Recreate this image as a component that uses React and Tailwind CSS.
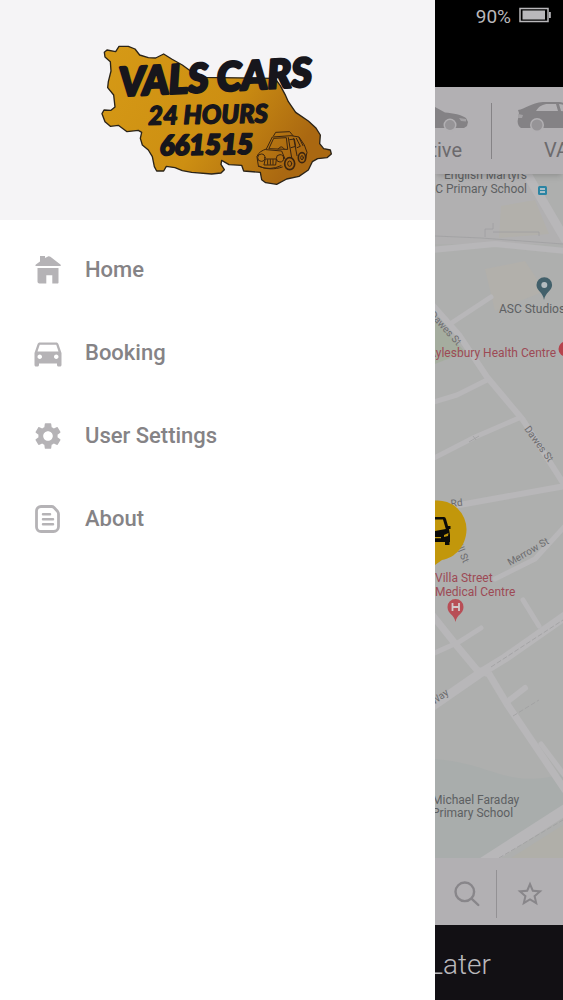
import React from 'react';
import { MdDirectionsCar, MdSettings, MdStarBorder } from 'react-icons/md';

const HomeIcon = () => (
    <svg viewBox="0 0 28 30" className="w-7 h-[30px]" fill="currentColor" aria-hidden="true">
        <path d="M6 1h5v2l3-1.6c.8-.4 1.6-.2 2.4.3L26.4 9.400c.8.6.5 1.600-.5 1.600H2.300c-1 0-1.200-1-.4-1.600L6 6.500z" />
        <path d="M3.500 13h21v14.500c0 .6-.4 1-1 1h-5.200v-8.300h-6v8.300H5.500c-1.200 0-2-.8-2-2z" />
    </svg>
);

const AboutIcon = () => (
    <svg viewBox="0 0 28 30" className="w-7 h-[30px]" fill="none" stroke="currentColor" strokeLinecap="round" strokeLinejoin="round" aria-hidden="true">
        <path strokeWidth="2.800" d="M7 2.500h10.500q1.500 0 2.500 1l3.500 3.800q1 1.200 1 2.700v12.500a5 5 0 0 1-5 5H7a4.500 4.500 0 0 1-4.500-4.500V7A4.500 4.500 0 0 1 7 2.500z" />
        <path strokeWidth="2.500" d="M9 10.300h7M9 15.300h10M9 20.300h10" />
    </svg>
);

const menu = [
    { label: 'Home', icon: <HomeIcon /> },
    { label: 'Booking', icon: <MdDirectionsCar size={36} /> },
    { label: 'User Settings', icon: <MdSettings size={32} /> },
    { label: 'About', icon: <AboutIcon /> },
];

const Logo = () => (
    <svg viewBox="0 0 735 480" className="w-[245px] h-40" role="img" aria-label="Vals Cars">
        <defs>
            <linearGradient id="gold" x1="0" y1="0" x2="1" y2="0.4">
                <stop offset="0" stopColor="#d69a16" />
                <stop offset="0.6" stopColor="#cd8f12" />
                <stop offset="1" stopColor="#aa6811" />
            </linearGradient>
        </defs>
        <path
            d="M28 52 L36 45 L62 50 L72 34 L100 34 L120 42 L134 60 L160 68 L182 69 L206 57 L230 72 L262 90 L300 118 L318 127 L540 130 L556 152 L570 178 L580 200 L602 232 L640 258 L662 278 L676 300 L674 326 L686 341 L706 345 L709 357 L696 368 L668 371 L652 380 L640 405 L612 424 L575 432 L545 448 L512 443 L500 434 L496 412 L446 408 L440 391 L402 389 L380 376 L378 388 L388 404 L378 414 L350 417 L290 412 L262 407 L240 398 L214 394 L206 408 L185 408 L178 395 L172 365 L160 345 L142 330 L136 310 L140 292 L130 286 L96 290 L70 271 L46 274 L30 260 L21 236 L27 225 L48 226 L60 216 L56 180 L38 158 L40 140 L48 108 L46 80 L30 66 Z"
            fill="url(#gold)"
            stroke="#2a2318"
            strokeWidth="4"
            strokeLinejoin="round"
        />
        <g fill="#17161c" stroke="#17161c" strokeLinejoin="round" fontFamily="Lato, 'Open Sans', sans-serif" fontWeight="900" fontStyle="italic">
            <text x="74" y="184" fontSize="119" strokeWidth="8" transform="rotate(-3 74 184)">VALS CARS</text>
            <text x="160" y="269" fontSize="77" strokeWidth="4" transform="rotate(-1 160 269)">24 HOURS</text>
            <text x="194" y="361" fontSize="83" strokeWidth="6" transform="rotate(-1 194 361)">661515</text>
        </g>
        <g fill="none" stroke="#3a2410" strokeWidth="3" strokeLinecap="round" strokeLinejoin="round">
            <path d="M486 364 C490 352 502 346 514 342 L532 306 L588 302 L612 306 L628 330 L636 352 L632 370" />
            <path d="M536 302 L542 292 L584 290 L594 302" />
            <path d="M522 340 L536 310 L574 308 L578 342 Z M550 342 q8 -14 18 0" />
            <path d="M580 308 L590 368 M596 310 L606 362 M584 314 L598 312 L602 334 L588 338 M604 310 L616 334 L606 338 M612 308 L624 332" />
            <path d="M514 344 L560 348 L570 372 M486 366 L490 392 C510 404 540 404 562 396" />
            <circle cx="499" cy="368" r="11" />
            <circle cx="555" cy="370" r="11" />
            <path d="M512 372 H544 L542 390 H508 Z M518 374 v14 M526 374 v14 M534 374 v14 M490 394 q36 14 68 -2" />
            <ellipse cx="584" cy="386" rx="15" ry="18" strokeWidth="5" />
            <ellipse cx="584" cy="386" rx="6" ry="8" />
            <ellipse cx="621" cy="368" rx="11" ry="15" strokeWidth="5" />
            <ellipse cx="621" cy="368" rx="4" ry="6" />
        </g>
    </svg>
);

const Drawer = () => (
    <aside className="flex-1 min-w-0 bg-white">
        <div className="h-[220px] bg-[#f5f4f6] flex items-center justify-center pt-2.5">
            <Logo />
        </div>
        <nav className="pt-2">
            <ul>
                {menu.map((item) => (
                    <li key={item.label}>
                        <a href="#" className="flex items-center h-[83px] px-[30px] gap-[19px] text-[#858386]">
                            <span className="w-9 flex justify-center text-[#b5b3b6]">{item.icon}</span>
                            <span className="text-[22px] leading-7 font-medium">{item.label}</span>
                        </a>
                    </li>
                ))}
            </ul>
        </nav>
    </aside>
);

const StatusBar = () => (
    <div className="h-[87px] bg-black flex items-start justify-end gap-2 pr-3 pt-1.5 text-[#b9b8bb]">
        <span className="text-[19px] leading-[22px]">90%</span>
        <svg viewBox="0 0 32 18" className="w-8 h-[18px]" aria-hidden="true">
            <path d="M1 2.500h28v13H1z" fill="none" stroke="currentColor" strokeWidth="1.500" />
            <path d="M3.500 4.500h22.500v9H3.500z" fill="currentColor" />
            <path d="M30 6h1.800v6H30z" fill="currentColor" />
        </svg>
    </div>
);

const CarTypes = () => (
    <div className="relative z-10 h-[87px] bg-[#b2b0b3] flex items-center overflow-hidden shadow-md text-[#6c6a6d]">
        <button type="button" className="w-14 shrink-0 h-full flex flex-col items-end pt-[15px] pr-[23px] gap-1">
            <svg viewBox="0 0 33 30" className="w-[33px] h-[30px] shrink-0" aria-hidden="true">
                <path d="M0 5 L10 10.500 C18 11 27 13 31 16 L33 20 L32 24 L29 26 H0 Z" fill="#848285" />
                <path d="M24 16 l7 1 v2.500 l-5 -.5z" fill="#a3a1a4" />
                <circle cx="15" cy="23" r="6.500" fill="#b2b0b3" />
                <circle cx="15" cy="23" r="5" fill="#969497" />
            </svg>
            <span className="text-xl leading-7 pr-1.5">tive</span>
        </button>
        <span className="w-px h-14 bg-[#858386]" />
        <button type="button" className="flex-1 min-w-0 h-full flex flex-col items-start pt-[15px] pl-[25px] gap-1">
            <svg viewBox="0 0 76 30" className="w-[76px] h-[30px] shrink-0" aria-hidden="true">
                <path d="M1 8 C8 7 14 1 26 0 H42 C50 1 56 6 62 10 C70 11 75 14 76 19 L74 26 H4 C1 24 0 20 1 17 L2 11 Z" fill="#848285" />
                <path d="M19 9 C22 4 26 2 31 2 H39 L41 9 Z M42 2 C49 3 53 6 57 10 L44 9 Z" fill="#b2b0b3" />
                <path d="M1 12 l5 1 -1 3 -4 0z" fill="#a3a1a4" />
                <circle cx="20" cy="23" r="7" fill="#b2b0b3" />
                <circle cx="20" cy="23" r="5.500" fill="#969497" />
            </svg>
            <span className="text-xl leading-7 pl-[27px]">VA</span>
        </button>
    </div>
);

const roads = [
    { d: 'M-4 76 L60 70 L130 77', w: 6 },
    { d: 'M92 0 L130 65', w: 9 },
    { d: 'M-5 128 L24 161 L52 203 L88 246 L130 312', w: 6 },
    { d: 'M15 150 L56 123', w: 5 },
    { d: 'M-5 229 L22 221 L52 206', w: 5 },
    { d: 'M-5 286 L40 263 L84 244', w: 5 },
    { d: 'M-5 336 L30 330 L130 312', w: 6 },
    { d: 'M60 405 L100 385 L130 352', w: 5 },
    { d: 'M-5 438 L22 472 L42 496 L54 500 L72 530 L130 616', w: 7 },
    { d: 'M-5 481 L24 468 L46 454', w: 5 },
    { d: 'M-5 534 L44 500 L70 484 L130 442', w: 9 },
    { d: 'M88 426 L104 452', w: 5 },
    { d: 'M72 528 L90 514', w: 6 },
    { d: 'M106 570 L130 602', w: 5 },
    { d: 'M46 690 L130 636', w: 11 },
];

const Map = () => (
    <div className="flex-1 min-h-0 overflow-hidden bg-[#aeaead]">
        <svg viewBox="0 0 128 684" preserveAspectRatio="xMinYMin slice" className="block w-full h-full" role="img" aria-label="Map">
            <rect width="128" height="684" fill="#aeafae" />
            <path d="M0 0h92l36 62v8H0z" fill="#b1b0b1" />
            <path d="M66 32 l34 -6 14 34 -50 4z M50 95 l40 -8 20 30 -50 20z" fill="#b2b0ab" />
            <path d="M0 146 l16 16 14 16 -30 12z" fill="#a5ad9f" />
            <path d="M0 585 C60 590 70 615 128 600 V640 L46 684 H0z" fill="#a9adac" />
            <path d="M76 684 L128 651 V684z" fill="#b0afa9" />
            <g fill="none" stroke="#b8b7b9" strokeLinejoin="round" strokeLinecap="round">
                {roads.map((r) => <path key={r.d} d={r.d} strokeWidth={r.w} />)}
            </g>
            <g fill="none" stroke="#a09fa1" strokeWidth="0.800">
                <path d="M0 62 L46 64 L128 70 M50 63 v-8 h8 v-6 M58 58 h46 v4" />
                <path d="M56 493 L128 446 M78 542 L104 526 M64 684 L128 646" strokeDasharray="5 2" />
                <path d="M34 268 L44 262 M38 262 l3 4" />
            </g>
            <g fontSize="12" fill="#5d6062">
                <text x="92" y="5" textAnchor="end">English Martyrs</text>
                <text x="92" y="19" textAnchor="end">RC Primary School</text>
                <text x="64" y="139">ASC Studios</text>
                <text x="-3" y="630">Michael Faraday</text>
                <text x="-3" y="643">Primary School</text>
            </g>
            <g fontSize="12" fill="#9d4a55">
                <text x="121" y="183" textAnchor="end">Aylesbury Health Centre</text>
                <text x="0" y="408">Villa Street</text>
                <text x="0" y="422">Medical Centre</text>
            </g>
            <g fontSize="10" fill="#6c6c6e">
                <text x="-6" y="141" transform="rotate(48 -6 141)">Dawes St</text>
                <text x="89" y="255" transform="rotate(54 89 255)">Dawes St</text>
                <text x="75" y="392" transform="rotate(-30 75 392)">Merrow St</text>
                <text x="16" y="333" transform="rotate(-6 16 333)">Rd</text>
                <text x="21" y="372" transform="rotate(68 21 372)">ill St</text>
                <text x="-1" y="531" transform="rotate(-36 -1 531)">Way</text>
            </g>
            {/* bus stop */}
            <rect x="103" y="12" width="9" height="9" rx="1.500" fill="#2b84a3" />
            <path d="M105 14h5v5h-5z" fill="#a9bfc8" />
            <path d="M105 16h5v1h-5z" fill="#2b84a3" />
            {/* place pins */}
            <path d="M109 126 C108 118 101.500 117 101.500 111 a7.800 7.800 0 0 1 15.600 0 C117 117 110.500 118 109 126z" fill="#42606b" />
            <circle cx="109.300" cy="111" r="3" fill="#b4bcc0" />
            <circle cx="131" cy="175" r="7.500" fill="#b5434c" />
            <path d="M20.500 448 C19 440 12.500 440 12.500 433 a8 8 0 0 1 16 0 C28.500 440 22 440 20.500 448z" fill="#b84e56" />
            <path d="M17.500 429v8M24 429v8M17.500 433h6.500" stroke="#d2c9cb" strokeWidth="1.800" />
            {/* taxi marker */}
            <path d="M0 326.500 A29 29 0 0 1 31.500 356 C31 372 20 384 7 386 L0 391z" fill="#c2970b" />
            <path d="M0 343 H9 Q10.500 343 11 345 L13 352 L15.500 352 V355 H14 L15 361 V368 H14.500 V371 H10 V368 H0z" fill="#0b0b08" />
            <path d="M0 345.500 H8 L10.800 355 L0 357z" fill="#c2970b" />
            <path d="M9 361 l4.500 -2 -.5 3 -4 1z M0 363h6v1.200h-6z" fill="#c2970b" />
        </svg>
    </div>
);

const SearchBar = () => (
    <div className="h-[67px] bg-[#b2b0b3] flex items-center text-[#88868a]">
        <button type="button" aria-label="Search" className="w-[61px] h-full flex items-center pl-[19px] pt-1">
            <svg viewBox="0 0 26 26" className="w-[26px] h-[26px]" fill="none" stroke="currentColor" strokeWidth="2.400" strokeLinecap="round" aria-hidden="true">
                <circle cx="10.800" cy="10.800" r="9.300" />
                <path d="M17.800 17.800l6.500 6.200" />
            </svg>
        </button>
        <span className="w-px h-12 bg-[#939194] mt-1" />
        <button type="button" aria-label="Favourites" className="flex-1 h-full flex items-center justify-center pt-1">
            <MdStarBorder size={30} />
        </button>
    </div>
);

const Screen = () => (
    <main className="w-32 shrink-0 flex flex-col overflow-hidden">
        <StatusBar />
        <CarTypes />
        <Map />
        <SearchBar />
        <button type="button" className="h-[75px] bg-[#121014] text-[#b9b8bb] text-[28px] leading-9 font-light flex items-center justify-end pr-[72px] pt-1">
            Later
        </button>
    </main>
);

const App = () => (
    <div className="flex h-screen min-h-[640px] overflow-hidden font-[Roboto,sans-serif]">
        <Drawer />
        <Screen />
    </div>
);

export default App;
